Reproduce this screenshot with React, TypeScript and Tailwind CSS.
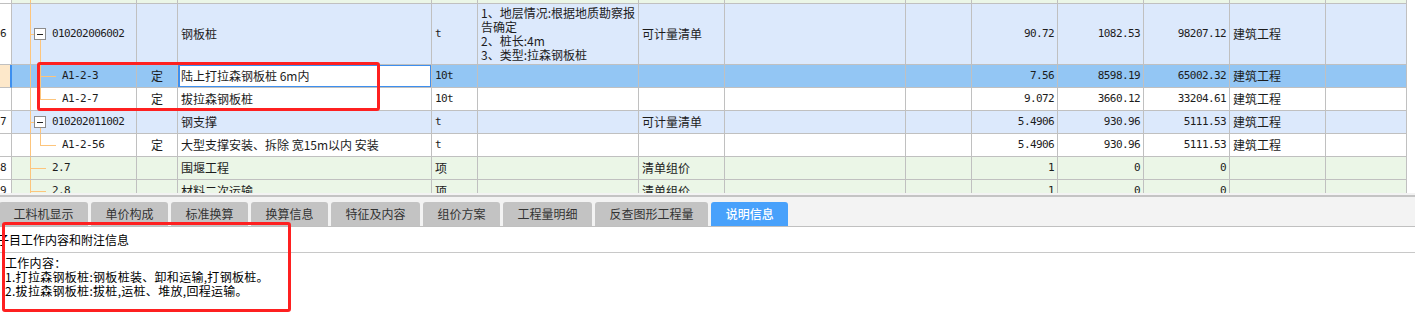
import type { ReactNode } from 'react';

type Tone = 'green' | 'blue' | 'sel' | 'white';
type Tree = 'top' | 'open' | 'mid' | 'last' | 'leaf';

interface Row {
  num?: string;
  tone: Tone;
  tree: Tree;
  code?: string;
  kind?: string;
  name?: string;
  unit?: string;
  feature?: string[];
  cat?: string;
  qty?: string;
  price?: string;
  total?: string;
  prof?: string;
}

const COLS =
  'grid-cols-[12px_125px_41px_254px_46px_161px_86px_181px_66px_86px_86px_86px_96px_81px]';
const CJK = "font-['Noto_Sans_CJK_SC',sans-serif] text-[12px]";
const MONO = "font-['DejaVu_Sans_Mono',monospace] text-[11px] tracking-[-0.6px]";
const CELL = 'relative flex items-center overflow-hidden whitespace-nowrap border-r border-b border-[#c0c0c0]';
const LINE = 'absolute bg-[#fdc57c]';

const toneBg: Record<Tone, string> = {
  green: 'bg-[#ebf6e7]',
  blue: 'bg-[#dce9fc]',
  sel: 'bg-[#93c6f4]',
  white: 'bg-white',
};

const rows: Row[] = [
  { tone: 'green', tree: 'top' },
  {
    num: '6',
    tone: 'blue',
    tree: 'open',
    code: '010202006002',
    name: '钢板桩',
    unit: 't',
    feature: ['1、地层情况:根据地质勘察报告确定', '2、桩长:4m', '3、类型:拉森钢板桩'],
    cat: '可计量清单',
    qty: '90.72',
    price: '1082.53',
    total: '98207.12',
    prof: '建筑工程',
  },
  {
    tone: 'sel',
    tree: 'mid',
    code: 'A1-2-3',
    kind: '定',
    name: '陆上打拉森钢板桩 6m内',
    unit: '10t',
    qty: '7.56',
    price: '8598.19',
    total: '65002.32',
    prof: '建筑工程',
  },
  {
    tone: 'white',
    tree: 'last',
    code: 'A1-2-7',
    kind: '定',
    name: '拔拉森钢板桩',
    unit: '10t',
    qty: '9.072',
    price: '3660.12',
    total: '33204.61',
    prof: '建筑工程',
  },
  {
    num: '7',
    tone: 'blue',
    tree: 'open',
    code: '010202011002',
    name: '钢支撑',
    unit: 't',
    cat: '可计量清单',
    qty: '5.4906',
    price: '930.96',
    total: '5111.53',
    prof: '建筑工程',
  },
  {
    tone: 'white',
    tree: 'last',
    code: 'A1-2-56',
    kind: '定',
    name: '大型支撑安装、拆除 宽15m以内 安装',
    unit: 't',
    qty: '5.4906',
    price: '930.96',
    total: '5111.53',
    prof: '建筑工程',
  },
  { num: '8', tone: 'green', tree: 'leaf', code: '2.7', name: '围堰工程', unit: '项', cat: '清单组价', qty: '1', price: '0', total: '0' },
  { num: '9', tone: 'green', tree: 'leaf', code: '2.8', name: '材料二次运输', unit: '项', cat: '清单组价', qty: '1', price: '0', total: '0' },
];

const tabs = ['工料机显示', '单价构成', '标准换算', '换算信息', '特征及内容', '组价方案', '工程量明细', '反查图形工程量', '说明信息'];

function TreeLines({ tree }: { tree: Tree }) {
  return (
    <>
      <span className={`${LINE} left-[18px] -top-px -bottom-px w-px`} />
      {tree === 'open' && (
        <>
          <span className={`${LINE} left-[18px] top-1/2 h-px w-[4px]`} />
          <span className={`${LINE} left-[28px] top-[calc(50%+6px)] -bottom-px w-px`} />
          <span className="absolute left-[22px] top-1/2 flex h-[12px] w-[12px] -translate-y-1/2 items-center justify-center border border-[#8c8c8c] bg-white">
            <span className="h-px w-[6px] bg-[#222]" />
          </span>
        </>
      )}
      {tree === 'mid' && <span className={`${LINE} left-[28px] -top-px -bottom-px w-px`} />}
      {tree === 'last' && <span className={`${LINE} left-[28px] -top-px h-[calc(50%+1px)] w-px`} />}
      {(tree === 'mid' || tree === 'last') && <span className={`${LINE} left-[28px] top-1/2 h-px w-[16px]`} />}
      {tree === 'leaf' && <span className={`${LINE} left-[18px] top-1/2 h-px w-[16px]`} />}
    </>
  );
}

function Cell({ className = '', children }: { className?: string; children?: ReactNode }) {
  return <div className={`${CELL} ${className}`}>{children}</div>;
}

function hasCjk(s?: string) {
  return !!s && /[\u4e00-\u9fff]/.test(s);
}

function GridRow({ row }: { row: Row }) {
  const sel = row.tone === 'sel';
  const bg = toneBg[row.tone];
  const height = row.tree === 'top' ? 'h-[4px]' : row.feature ? 'h-[61px]' : 'h-[23px]';
  const child = row.tree === 'mid' || row.tree === 'last';
  const num = `${MONO} justify-end pr-[3px]`;

  return (
    <div className={`grid ${COLS} ${height} text-[#1c1c1c]`}>
      <Cell className={`${MONO} ${sel ? 'border-r-2 border-r-[#3d8fef] bg-[#fde8ca]' : 'bg-white'}`}>
        {row.num}
      </Cell>
      <Cell className={`${bg} ${MONO} ${child ? 'pl-[50px]' : 'pl-[40px]'}`}>
        <TreeLines tree={row.tree} />
        {row.code}
      </Cell>
      <Cell className={`${bg} ${CJK} justify-center`}>{row.kind}</Cell>
      <Cell className={`${sel ? 'bg-white' : bg} ${CJK} pl-[3px]`}>
        {sel && <span className="absolute -top-px left-0 -right-px -bottom-px border-2 border-[#3d8fef]" />}
        {row.name}
      </Cell>
      <Cell className={`${bg} ${hasCjk(row.unit) ? CJK : MONO} pl-[3px]`}>{row.unit}</Cell>
      <Cell className={`${bg} ${CJK} pl-[3px] pr-px`}>
        {row.feature && (
          <div className="whitespace-normal leading-[14px]">
            {row.feature.map((line) => (
              <div key={line}>{line}</div>
            ))}
          </div>
        )}
      </Cell>
      <Cell className={`${bg} ${CJK} pl-[3px]`}>{row.cat}</Cell>
      <Cell className={bg} />
      <Cell className={bg} />
      <Cell className={`${bg} ${num}`}>{row.qty}</Cell>
      <Cell className={`${bg} ${num}`}>{row.price}</Cell>
      <Cell className={`${bg} ${num}`}>{row.total}</Cell>
      <Cell className={`${bg} ${CJK} pl-[3px]`}>{row.prof}</Cell>
      <Cell className={bg} />
    </div>
  );
}

export default function App() {
  return (
    <div className="relative h-[325px] w-[1415px] overflow-hidden bg-white">
      <div className="h-[193px] overflow-hidden">
        {rows.map((row, i) => (
          <GridRow key={i} row={row} />
        ))}
      </div>

      <div className="bg-[#f3f3f3] pt-[2px]">
        <div className="h-[2px] bg-[#c4c4c4]" />
        <div className="-ml-px flex h-[30px] items-end gap-[3px] border-b border-[#c0c0c0]">
          {tabs.map((tab) => {
            const active = tab === '说明信息';
            return (
              <div
                key={tab}
                className={`flex h-[24px] items-center rounded-t-[3px] px-[14.5px] ${CJK} ${
                  active ? 'bg-[#48a1fb] font-medium text-white' : 'bg-[#c3c3c3] text-[#333]'
                }`}
              >
                {tab}
              </div>
            );
          })}
        </div>
      </div>

      <div className={`${CJK} text-black`}>
        <div className="h-[26px] border-b border-[#c8c8c8] leading-[26px]">
          <span className="-ml-[3px]">子目工作内容和附注信息</span>
        </div>
        <div className="pl-[5px] pt-[3px] leading-[14px] tracking-[0.3px]">
          <div>工作内容：</div>
          <div>1.打拉森钢板桩:钢板桩装、卸和运输,打钢板桩。</div>
          <div>2.拔拉森钢板桩:拔桩,运桩、堆放,回程运输。</div>
        </div>
      </div>

      <div className="absolute left-[37px] top-[62px] h-[49px] w-[343px] rounded-[3px] border-[3px] border-[#fe2020]" />
      <div className="absolute left-[2px] top-[222px] h-[90px] w-[289px] rounded-[3px] border-[3px] border-[#fe2020]" />
    </div>
  );
}
